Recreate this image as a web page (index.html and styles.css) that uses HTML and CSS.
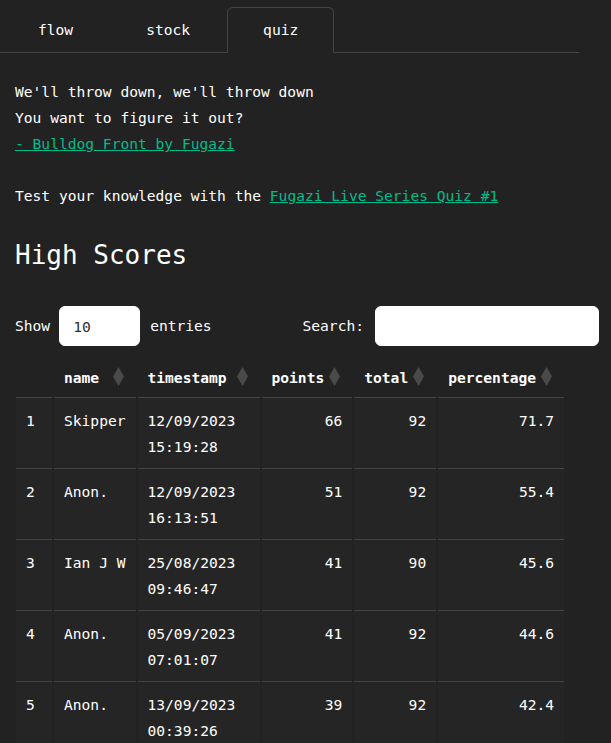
FILE: index.html
```html
<!DOCTYPE html>
<html lang="en">
<head>
<meta charset="utf-8">
<title>quiz</title>
<link rel="stylesheet" href="styles.css">
</head>
<body>
<nav class="tabs">
  <a class="tab" href="#">flow</a>
  <a class="tab" href="#">stock</a>
  <a class="tab active" href="#">quiz</a>
</nav>
<main class="content">
  <p class="lyrics">We'll throw down, we'll throw down<br>You want to figure it out?<br><a class="link" href="#">- Bulldog Front by Fugazi</a></p>
  <p class="intro">Test your knowledge with the <a class="link" href="#">Fugazi Live Series Quiz #1</a></p>
  <h2 class="title">High Scores</h2>
  <div class="controls">
    <label class="ctl">Show <input class="field len" type="text" value="10"> entries</label>
    <label class="ctl">Search: <input class="field search" type="text"></label>
  </div>
  <table class="scores">
    <thead>
      <tr>
        <th class="idx"></th>
        <th>name<svg class="sort" viewBox="0 0 11 19" width="11" height="19"><polygon points="5.5,0 11,9.5 5.5,19 0,9.5"/></svg></th>
        <th class="ts">timestamp<svg class="sort" viewBox="0 0 11 19" width="11" height="19"><polygon points="5.5,0 11,9.5 5.5,19 0,9.5"/></svg></th>
        <th>points<svg class="sort" viewBox="0 0 11 19" width="11" height="19"><polygon points="5.5,0 11,9.5 5.5,19 0,9.5"/></svg></th>
        <th>total<svg class="sort" viewBox="0 0 11 19" width="11" height="19"><polygon points="5.5,0 11,9.5 5.5,19 0,9.5"/></svg></th>
        <th>percentage<svg class="sort" viewBox="0 0 11 19" width="11" height="19"><polygon points="5.5,0 11,9.5 5.5,19 0,9.5"/></svg></th>
      </tr>
    </thead>
    <tbody>
      <tr><td>1</td><td>Skipper</td><td>12/09/2023 15:19:28</td><td class="num">66</td><td class="num">92</td><td class="num">71.7</td></tr>
      <tr><td>2</td><td>Anon.</td><td>12/09/2023 16:13:51</td><td class="num">51</td><td class="num">92</td><td class="num">55.4</td></tr>
      <tr><td>3</td><td>Ian J W</td><td>25/08/2023 09:46:47</td><td class="num">41</td><td class="num">90</td><td class="num">45.6</td></tr>
      <tr><td>4</td><td>Anon.</td><td>05/09/2023 07:01:07</td><td class="num">41</td><td class="num">92</td><td class="num">44.6</td></tr>
      <tr><td>5</td><td>Anon.</td><td>13/09/2023 00:39:26</td><td class="num">39</td><td class="num">92</td><td class="num">42.4</td></tr>
    </tbody>
  </table>
</main>
</body>
</html>
```

FILE: styles.css
```css
html {
  background: #222;
}

body {
  margin: 0;
  background: #222;
  color: #fff;
  font-family: "DejaVu Sans Mono", monospace;
  font-size: 14.6px;
  line-height: 26px;
}

.tabs {
  display: flex;
  align-items: flex-end;
  gap: 1px;
  width: 579px;
  box-sizing: border-box;
  padding: 7px 0 0 2px;
  border-bottom: 1px solid #444;
}

.tab {
  display: block;
  padding: 9px 35px;
  border: 1px solid transparent;
  border-radius: 6px 6px 0 0;
  margin-bottom: -1px;
  color: #fff;
  text-decoration: none;
}

.tab.active {
  border-color: #444 #444 #222;
  background: #222;
}

.content {
  padding: 26px 12px 0 15px;
}

.lyrics {
  margin: 0 0 26px;
}

.intro {
  margin: 0;
}

.link {
  color: #00bc8c;
  text-decoration: underline;
}

.title {
  margin: 31px 0 0;
  font-size: 26px;
  line-height: 31px;
  font-weight: normal;
}

.controls {
  display: flex;
  justify-content: space-between;
  align-items: center;
  height: 40px;
  margin-top: 35px;
}

.ctl {
  display: flex;
  align-items: center;
}

.field {
  box-sizing: border-box;
  height: 40px;
  border: 1px solid #fff;
  border-radius: 6px;
  background: #fff;
  color: #303030;
  font-family: "DejaVu Sans Mono", monospace;
  font-size: 14.6px;
  padding: 0 13px;
  outline: none;
}

.len {
  width: 81px;
  margin: 0 10px 0 9px;
}

.search {
  width: 224px;
  margin-left: 11px;
}

.scores {
  border-collapse: separate;
  border-spacing: 2px 0;
  margin: 5px 0 0 -1px;
}

.scores th {
  position: relative;
  padding: 14px 28px 6px 10px;
  text-align: left;
  font-weight: bold;
  white-space: nowrap;
  border-bottom: 1px solid #444;
}

.scores th.idx {
  padding-right: 26px;
}

.scores th.ts {
  width: 84px;
}

.sort {
  position: absolute;
  right: 12px;
  top: 16px;
  fill: #4a4a4a;
}

.scores td {
  padding: 10px 10px 8px;
  background: #252525;
  border-bottom: 1px solid #444;
  vertical-align: top;
}

.scores td.num {
  text-align: right;
}
```
